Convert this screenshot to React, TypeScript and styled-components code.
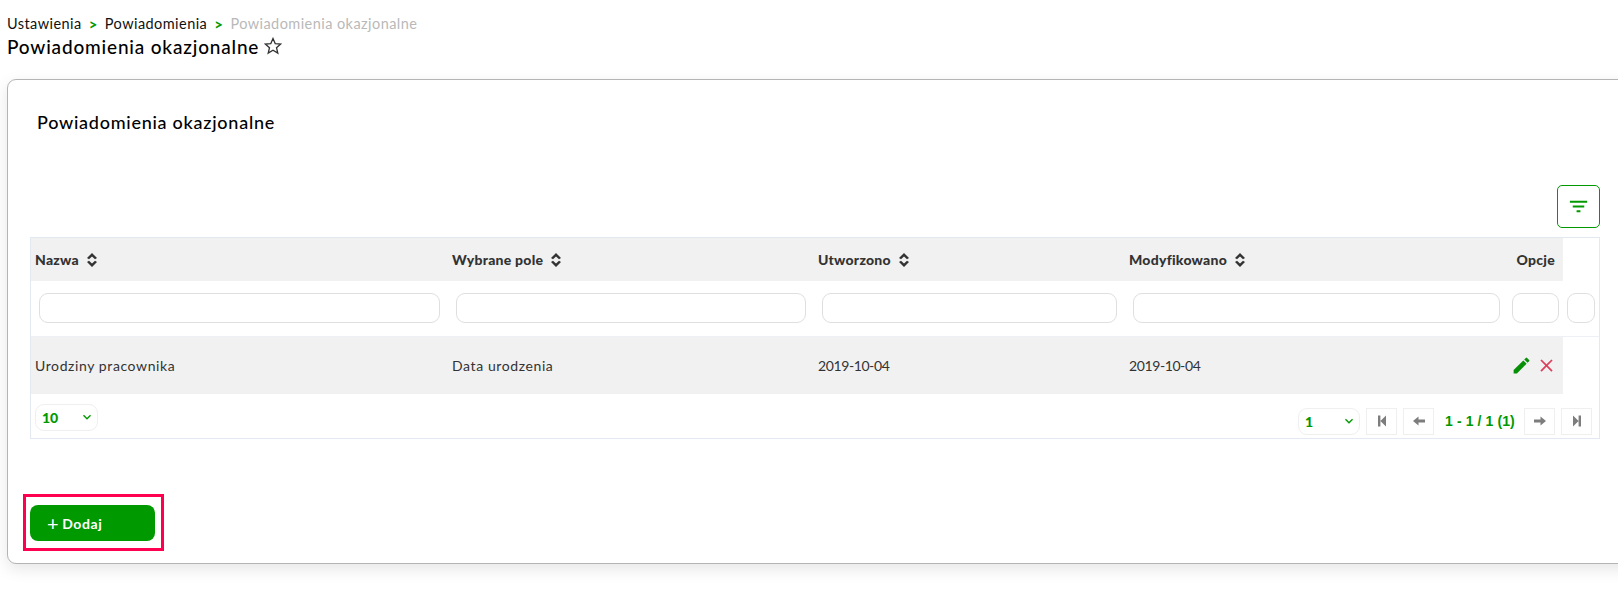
import React from 'react'
import styled, { createGlobalStyle } from 'styled-components'
import { MdEdit, MdFilterList, MdClose, MdKeyboardArrowDown } from 'react-icons/md'

const GlobalStyle = createGlobalStyle`
  html, body {
    margin: 0;
    padding: 0;
    background: #fff;
    overflow: hidden;
    font-family: Lato, "Open Sans", sans-serif;
    color: #000;
  }
`

const Page = styled.div`
  width: 1618px;
  height: 592px;
  overflow: hidden;
  padding: 15px 0 0 7px;
  box-sizing: border-box;
`

const Breadcrumb = styled.nav`
  display: flex;
  align-items: center;
  gap: 7px;
  height: 17px;
  font-size: 14.5px;
  letter-spacing: 0.44px;
`

const Crumb = styled.span<{ $muted?: boolean }>`
  color: ${p => (p.$muted ? '#b9b9b9' : '#111')};
`

const Sep = styled.span`
  color: #009900;
  font-size: 15px;
  font-weight: 700;
`

const TitleRow = styled.div`
  display: flex;
  align-items: center;
  gap: 5px;
  height: 26px;
  margin-top: 1px;
`

const Title = styled.h1`
  margin: 0;
  font-size: 19px;
  font-weight: 500;
  letter-spacing: 0.82px;
`

const Card = styled.section`
  width: 1660px;
  height: 485px;
  margin-top: 20px;
  box-sizing: border-box;
  padding: 30px 0 0 22px;
  background: #fff;
  border: 1px solid #b4b4b4;
  border-radius: 9px;
  box-shadow: 0 5px 16px rgba(0, 0, 0, 0.1);
`

const CardInner = styled.div`
  width: 1570px;
`

const CardTitle = styled.h2`
  margin: 0 0 0 7px;
  height: 25px;
  line-height: 25px;
  font-size: 18px;
  font-weight: 500;
  letter-spacing: 0.74px;
`

const Toolbar = styled.div`
  display: flex;
  justify-content: flex-end;
  margin-top: 50px;
  margin-bottom: 9px;
`

const FilterButton = styled.button`
  display: flex;
  align-items: center;
  justify-content: center;
  width: 43px;
  height: 43px;
  padding: 0;
  background: #fff;
  border: 1px solid #009900;
  border-radius: 5px;
  color: #009900;
  font-size: 23px;
`

const TableBox = styled.div`
  border: 1px solid #e3e9f0;
  height: 202px;
  box-sizing: border-box;
`

const Table = styled.table`
  width: 100%;
  border-collapse: collapse;
  table-layout: fixed;
`

const HeadCell = styled.th<{ $right?: boolean; $plain?: boolean }>`
  height: 43px;
  padding: 0 8px 0 4px;
  background: ${p => (p.$plain ? '#fff' : '#f1f1f2')};
  text-align: ${p => (p.$right ? 'right' : 'left')};
  font-size: 14px;
  font-weight: 900;
  color: #333;
  letter-spacing: 0.25px;
`

const SortIcon = styled.svg`
  width: 10px;
  height: 14px;
  margin-left: 8px;
  vertical-align: -2px;
  fill: #333;
`

const FilterCell = styled.td`
  height: 55px;
  padding: 0 8px;
  box-sizing: border-box;
  border-bottom: 1px solid #edf0f4;
`

const FilterCellNarrow = styled(FilterCell)`
  padding: 0 4px;
`

const FilterInput = styled.input`
  display: block;
  width: 100%;
  height: 30px;
  box-sizing: border-box;
  padding: 0;
  background: #fff;
  border: 1px solid #dfdfdf;
  border-radius: 9px;
  outline: none;
`

const BodyCell = styled.td<{ $plain?: boolean }>`
  height: 57px;
  padding: 0 8px 0 4px;
  background: ${p => (p.$plain ? '#fff' : '#f1f1f2')};
  font-size: 14px;
  color: #333;
  letter-spacing: 0.6px;
`

const DateCell = styled(BodyCell)`
  letter-spacing: -0.4px;
`

const ActionCell = styled(BodyCell)`
  padding: 0 6px 0 0;
  text-align: right;
  white-space: nowrap;
`

const EditIcon = styled(MdEdit)`
  color: #078f07;
  font-size: 21px;
  vertical-align: middle;
`

const DeleteIcon = styled(MdClose)`
  color: #dc3f5c;
  font-size: 21px;
  margin-left: 4px;
  vertical-align: middle;
`

const Footer = styled.div`
  display: flex;
  justify-content: space-between;
  align-items: flex-start;
  padding: 10px 7px 0 4px;
`

const Pager = styled.div`
  display: flex;
  align-items: center;
  gap: 6px;
  margin-top: 4px;
`

const SelectBox = styled.div<{ $width: number }>`
  display: flex;
  align-items: center;
  justify-content: space-between;
  width: ${p => p.$width}px;
  height: 27px;
  box-sizing: border-box;
  padding: 0 2px 0 6px;
  border: 1px solid #efefef;
  border-radius: 9px;
  color: #009900;
  font-size: 14px;
  font-weight: 900;
  svg {
    font-size: 16px;
  }
`

const PageButton = styled.button`
  display: flex;
  align-items: center;
  justify-content: center;
  width: 31px;
  height: 27px;
  padding: 0;
  background: #fff;
  border: 1px solid #efefef;
  color: #7d7d7d;
`

const PagerIcon = styled.svg`
  width: 12px;
  height: 12px;
  fill: currentColor;
`

const PageInfo = styled.span`
  width: 78px;
  padding-left: 2px;
  box-sizing: border-box;
  text-align: center;
  font-family: "Liberation Sans", Arial, sans-serif;
  color: #009900;
  font-size: 14px;
  font-weight: 700;
  letter-spacing: 0.1px;
`

const Highlight = styled.div`
  display: inline-flex;
  margin: 55px 0 0 -7px;
  padding: 8px 6px 7px 4px;
  border: 3px solid #ff0050;
`

const AddButton = styled.button`
  display: flex;
  align-items: center;
  gap: 3px;
  width: 125px;
  height: 36px;
  padding: 0 0 0 17px;
  background: #009900;
  border: none;
  border-radius: 8px;
  color: #fff;
  font-family: inherit;
  font-size: 14px;
  font-weight: 700;
  letter-spacing: 0.6px;
`

const Plus = styled.span`
  font-size: 20px;
  font-weight: 400;
  line-height: 1;
`

const Star = styled.svg`
  width: 18px;
  height: 18px;
  fill: none;
  stroke: #333;
  stroke-width: 1.3;
`

const columns = [417, 366, 311, 383, 55, 36]

const Sort = () => (
  <SortIcon viewBox="0 0 10 14">
    <path d="M5 0 10 5 8 6.3 5 3.4 2 6.3 0 5zM5 14 0 9 2 7.7 5 10.6 8 7.7 10 9z" />
  </SortIcon>
)

const FirstIcon = () => (
  <PagerIcon viewBox="0 0 12 12">
    <path d="M2 .5h2.4v11H2zM10 .5v11L4.4 6z" />
  </PagerIcon>
)

const LastIcon = () => (
  <PagerIcon viewBox="0 0 12 12">
    <path d="M7.6 .5H10v11H7.6zM2 .5v11L7.6 6z" />
  </PagerIcon>
)

const PrevIcon = () => (
  <PagerIcon viewBox="0 0 12 12">
    <path d="M0 6 5.5 1.5v3H12v3H5.5v3z" />
  </PagerIcon>
)

const NextIcon = () => (
  <PagerIcon viewBox="0 0 12 12">
    <path d="M12 6 6.5 1.5v3H0v3h6.5v3z" />
  </PagerIcon>
)

export default function App() {
  return (
    <Page>
      <GlobalStyle />
      <Breadcrumb>
        <Crumb>Ustawienia</Crumb>
        <Sep>&gt;</Sep>
        <Crumb>Powiadomienia</Crumb>
        <Sep>&gt;</Sep>
        <Crumb $muted>Powiadomienia okazjonalne</Crumb>
      </Breadcrumb>
      <TitleRow>
        <Title>Powiadomienia okazjonalne</Title>
        <Star viewBox="0 0 18 18">
          <path d="M9 1.5 11.2 6.6 16.7 7.1 12.5 10.7 13.8 16.1 9 13.3 4.2 16.1 5.5 10.7 1.3 7.1 6.8 6.6z" />
        </Star>
      </TitleRow>
      <Card>
        <CardInner>
          <CardTitle>Powiadomienia okazjonalne</CardTitle>
          <Toolbar>
            <FilterButton><MdFilterList /></FilterButton>
          </Toolbar>
          <TableBox>
            <Table>
              <colgroup>
                {columns.map((w, i) => <col key={i} width={w} />)}
              </colgroup>
              <thead>
                <tr>
                  <HeadCell>Nazwa<Sort /></HeadCell>
                  <HeadCell>Wybrane pole<Sort /></HeadCell>
                  <HeadCell>Utworzono<Sort /></HeadCell>
                  <HeadCell>Modyfikowano<Sort /></HeadCell>
                  <HeadCell $right>Opcje</HeadCell>
                  <HeadCell $plain />
                </tr>
                <tr>
                  <FilterCell><FilterInput /></FilterCell>
                  <FilterCell><FilterInput /></FilterCell>
                  <FilterCell><FilterInput /></FilterCell>
                  <FilterCell><FilterInput /></FilterCell>
                  <FilterCellNarrow><FilterInput /></FilterCellNarrow>
                  <FilterCellNarrow><FilterInput /></FilterCellNarrow>
                </tr>
              </thead>
              <tbody>
                <tr>
                  <BodyCell>Urodziny pracownika</BodyCell>
                  <BodyCell>Data urodzenia</BodyCell>
                  <DateCell>2019-10-04</DateCell>
                  <DateCell>2019-10-04</DateCell>
                  <ActionCell><EditIcon /><DeleteIcon /></ActionCell>
                  <BodyCell $plain />
                </tr>
              </tbody>
            </Table>
            <Footer>
              <SelectBox $width={63}>10<MdKeyboardArrowDown /></SelectBox>
              <Pager>
                <SelectBox $width={62}>1<MdKeyboardArrowDown /></SelectBox>
                <PageButton><FirstIcon /></PageButton>
                <PageButton><PrevIcon /></PageButton>
                <PageInfo>1 - 1 / 1 (1)</PageInfo>
                <PageButton><NextIcon /></PageButton>
                <PageButton><LastIcon /></PageButton>
              </Pager>
            </Footer>
          </TableBox>
          <Highlight>
            <AddButton><Plus>+</Plus>Dodaj</AddButton>
          </Highlight>
        </CardInner>
      </Card>
    </Page>
  )
}
